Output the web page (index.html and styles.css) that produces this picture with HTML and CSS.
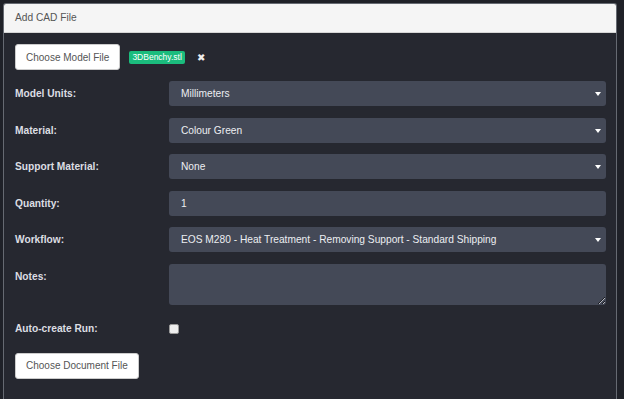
FILE: index.html
```html
<!DOCTYPE html>
<html lang="en">
<head>
  <meta charset="UTF-8">
  <title>Add CAD File</title>
  <link rel="stylesheet" href="styles.css">
</head>
<body>
  <div class="panel">
    <div class="panel-heading">Add CAD File</div>
    <div class="panel-body">
      <div class="file-row">
        <button class="btn" type="button">Choose Model File</button>
        <span class="badge">3DBenchy.stl</span>
        <span class="remove">&#x2716;</span>
      </div>

      <div class="form-row">
        <label class="form-label">Model Units:</label>
        <div class="select-wrap">
          <select class="form-control"><option>Millimeters</option></select>
        </div>
      </div>
      <div class="form-row">
        <label class="form-label">Material:</label>
        <div class="select-wrap">
          <select class="form-control"><option>Colour Green</option></select>
        </div>
      </div>
      <div class="form-row">
        <label class="form-label">Support Material:</label>
        <div class="select-wrap">
          <select class="form-control"><option>None</option></select>
        </div>
      </div>
      <div class="form-row">
        <label class="form-label">Quantity:</label>
        <input class="form-control" type="text" value="1">
      </div>
      <div class="form-row">
        <label class="form-label">Workflow:</label>
        <div class="select-wrap">
          <select class="form-control"><option>EOS M280 - Heat Treatment - Removing Support - Standard Shipping</option></select>
        </div>
      </div>
      <div class="form-row">
        <label class="form-label">Notes:</label>
        <textarea class="form-control notes"></textarea>
      </div>
      <div class="form-row">
        <label class="form-label">Auto-create Run:</label>
        <div class="check-wrap"><input class="check" type="checkbox"></div>
      </div>

      <button class="btn" type="button">Choose Document File</button>
    </div>
  </div>
</body>
</html>
```

FILE: styles.css
```css
html, body {
    height: 100%;
}
body {
    background-color: #1f2128;
    box-sizing: border-box;
    font-family: "Liberation Sans", Arial, sans-serif;
    font-size: 10.2px;
    margin: 0;
    overflow: hidden;
    padding: 3px 7px 0 3px;
}

/* panel */
.panel {
    background-color: #262830;
    border: solid 1px #666a72;
    border-bottom: none;
    border-radius: 3px 3px 0 0;
    box-sizing: border-box;
    height: 100%;
}
.panel-heading {
    background-color: #f5f5f5;
    border-bottom: solid 1px #d6d6d6;
    border-radius: 2px 2px 0 0;
    color: #555;
    font-size: 10.2px;
    height: 28px;
    line-height: 27px;
    padding: 0 11px;
}
.panel-body {
    padding: 11px 10px 0 11px;
}

/* buttons */
.btn {
    background-color: #fff;
    border: solid 1px #ccc;
    border-radius: 3px;
    color: #555;
    font-family: inherit;
    font-size: 10px;
    height: 26px;
    padding: 0 10px;
}
.file-row {
    align-items: center;
    display: flex;
    margin-bottom: 11px;
}
.badge {
    background-color: #1bbc7d;
    border-radius: 2px;
    color: #fff;
    font-size: 8.5px;
    line-height: 13px;
    margin-left: 9px;
    padding: 0 3px;
}
.remove {
    color: #eee;
    font-size: 10px;
    margin-left: 12px;
}

/* form */
.form-row {
    align-items: flex-start;
    display: flex;
    margin-bottom: 11.5px;
}
.form-label {
    color: #dcdee3;
    font-weight: bold;
    line-height: 25px;
    width: 154px;
}
.form-control {
    appearance: none;
    background-color: #444957;
    border: none;
    border-radius: 3px;
    box-sizing: border-box;
    color: #eceef2;
    flex: 1;
    font-family: inherit;
    font-size: 10.2px;
    height: 25px;
    padding: 0 12px;
    width: 100%;
}
.select-wrap {
    flex: 1;
    position: relative;
}
.select-wrap::after {
    border-left: 3px solid transparent;
    border-right: 3px solid transparent;
    border-top: 4px solid #fff;
    content: "";
    position: absolute;
    right: 5px;
    top: 11px;
}
.notes {
    height: 41px;
    resize: vertical;
}
.check-wrap {
    align-items: center;
    display: flex;
    height: 25px;
}
.check {
    appearance: none;
    background-color: #eee;
    border: solid 1px #9a9a9a;
    border-radius: 2px;
    height: 10px;
    margin: 0;
    width: 10px;
}
```
